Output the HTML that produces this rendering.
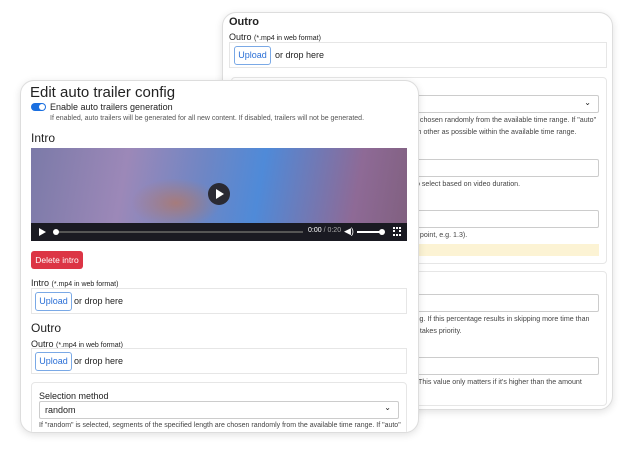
<!DOCTYPE html><html><head><style>
*{box-sizing:border-box;margin:0;padding:0}
body{width:633px;height:454px;background:#fff;font-family:"Liberation Sans",sans-serif;color:#222;position:relative;overflow:hidden}
.p{position:absolute;background:#fff;border:1px solid #ddd;border-radius:14px;overflow:hidden;box-shadow:0 2px 8px rgba(0,0,0,.12)}
.a{position:absolute;white-space:nowrap}
.box{position:absolute;border:1px solid #e6e6e6;background:#fff}
.up{position:absolute;border:1px solid #7aa9e6;border-radius:3px;color:#2a6fd6;font-size:9px;text-align:center;line-height:17px;background:#fff}
.in{position:absolute;border:1px solid #ccc;border-radius:2px;background:#fff}
.s{font-size:7.1px;color:#444}
</style></head><body>
<div class="p" style="left:222px;top:12px;width:391px;height:398px">
 <div class="a" style="left:6px;top:3px;font-size:11px;font-weight:bold">Outro</div>
 <div class="a" style="left:6px;top:19px;font-size:9px">Outro <span style="font-size:7px">(*.mp4 in web format)</span></div>
 <div class="box" style="left:6px;top:29px;width:378px;height:26px"></div>
 <div class="up" style="left:11px;top:33px;width:37px;height:19px">Upload</div>
 <div class="a" style="left:52px;top:37px;font-size:9px">or drop here</div>
 <div class="box" style="left:8px;top:64px;width:376px;height:187px;border-radius:4px"></div>
 <div class="in" style="left:150px;top:82px;width:226px;height:18px"><span class="a" style="right:7px;top:2px;font-size:8px">⌄</span></div>
 <div class="a s" style="left:191px;top:103px">e chosen randomly from the available time range. If "auto"</div>
 <div class="a s" style="left:191px;top:115px">ch other as possible within the available time range.</div>
 <div class="in" style="left:150px;top:146px;width:226px;height:18px"></div>
 <div class="a s" style="left:191px;top:167px">to select based on video duration.</div>
 <div class="in" style="left:150px;top:197px;width:226px;height:18px"></div>
 <div class="a s" style="left:191px;top:218px">g point, e.g. 1.3).</div>
 <div class="a" style="left:150px;top:231px;width:226px;height:12px;background:#fcf3d4"></div>
 <div class="box" style="left:8px;top:258px;width:376px;height:135px;border-radius:4px"></div>
 <div class="in" style="left:150px;top:281px;width:226px;height:18px"></div>
 <div class="a s" style="left:191px;top:302px">ing. If this percentage results in skipping more time than</div>
 <div class="a s" style="left:191px;top:314px">e takes priority.</div>
 <div class="in" style="left:150px;top:344px;width:226px;height:18px"></div>
 <div class="a s" style="left:195px;top:365px">This value only matters if it's higher than the amount</div>
</div>
<div class="p" style="left:20px;top:80px;width:399px;height:353px">
 <div class="a" style="left:9px;top:3px;font-size:15px">Edit auto trailer config</div>
 <div class="a" style="left:10px;top:22px;width:15px;height:8px;border-radius:4px;background:#1a6fe0"><div style="position:absolute;right:1px;top:1px;width:6px;height:6px;border-radius:50%;background:#fff"></div></div>
 <div class="a" style="left:29px;top:21px;font-size:9px">Enable auto trailers generation</div>
 <div class="a" style="left:29px;top:34px;font-size:7px;color:#555">If enabled, auto trailers will be generated for all new content. If disabled, trailers will not be generated.</div>
 <div class="a" style="left:10px;top:50px;font-size:12px">Intro</div>
 <div class="a" style="left:10px;top:67px;width:376px;height:93px;background:linear-gradient(100deg,#7b7aa8 0%,#9c88b8 25%,#6f86c4 45%,#4f8ad8 60%,#8e6a96 85%,#80607f 100%)">
  <div style="position:absolute;left:100px;top:30px;width:90px;height:50px;background:radial-gradient(#b8765e,transparent 70%);opacity:.7"></div>
  <div style="position:absolute;left:177px;top:35px;width:22px;height:22px;border-radius:50%;background:#2a2a33"><div style="position:absolute;left:8px;top:6px;border-left:8px solid #fff;border-top:5px solid transparent;border-bottom:5px solid transparent"></div></div>
  <div style="position:absolute;left:0;bottom:0;width:100%;height:18px;background:#1a1a22">
   <div style="position:absolute;left:8px;top:5px;border-left:7px solid #fff;border-top:4px solid transparent;border-bottom:4px solid transparent"></div>
   <div style="position:absolute;left:24px;top:8px;width:248px;height:2px;background:#555"></div>
   <div style="position:absolute;left:22px;top:6px;width:6px;height:6px;border-radius:50%;background:#fff"></div>
   <div style="position:absolute;left:277px;top:4px;font-size:7px;color:#fff">0:00 <span style="color:#aaa">/ 0:20</span></div>
   <div style="position:absolute;left:313px;top:3px;font-size:9px;color:#fff">◀)</div>
   <div style="position:absolute;left:326px;top:8px;width:26px;height:2px;background:#fff"></div>
   <div style="position:absolute;left:348px;top:6px;width:6px;height:6px;border-radius:50%;background:#fff"></div>
   <div style="position:absolute;left:362px;top:4px;width:8px;height:9px;border:2px dotted #fff"></div>
  </div>
 </div>
 <div class="a" style="left:10px;top:170px;width:52px;height:18px;background:#dc3545;border-radius:3px;color:#fff;font-size:8.5px;text-align:center;line-height:18px">Delete intro</div>
 <div class="a" style="left:10px;top:197px;font-size:9px">Intro <span style="font-size:7px">(*.mp4 in web format)</span></div>
 <div class="box" style="left:10px;top:207px;width:376px;height:26px"></div>
 <div class="up" style="left:14px;top:211px;width:37px;height:19px">Upload</div>
 <div class="a" style="left:53px;top:215px;font-size:9px">or drop here</div>
 <div class="a" style="left:10px;top:240px;font-size:12px">Outro</div>
 <div class="a" style="left:10px;top:258px;font-size:9px">Outro <span style="font-size:7px">(*.mp4 in web format)</span></div>
 <div class="box" style="left:10px;top:267px;width:376px;height:26px"></div>
 <div class="up" style="left:14px;top:271px;width:37px;height:19px">Upload</div>
 <div class="a" style="left:53px;top:275px;font-size:9px">or drop here</div>
 <div class="box" style="left:10px;top:301px;width:376px;height:70px;border-radius:4px"></div>
 <div class="a" style="left:18px;top:310px;font-size:9px">Selection method</div>
 <div class="in" style="left:18px;top:320px;width:360px;height:18px"><span class="a" style="left:5px;top:3px;font-size:9px">random</span><span class="a" style="right:7px;top:1px;font-size:8px">⌄</span></div>
 <div class="a s" style="left:18px;top:341px;font-size:7px">If "random" is selected, segments of the specified length are chosen randomly from the available time range. If "auto"</div>
</div>
</body></html>
